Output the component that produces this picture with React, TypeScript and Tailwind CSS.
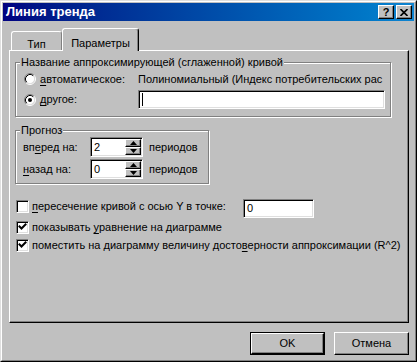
import React from 'react'

const font = { fontFamily: '"Liberation Sans", Arial, sans-serif' }

function Radio({ checked }: { checked?: boolean }) {
  return (
    <svg width="12" height="12" viewBox="0 0 12 12" className="shrink-0">
      <circle cx="6" cy="6" r="4.5" fill="#fff" />
      <path d="M2.11 9.89 A5.5 5.5 0 0 1 9.89 2.11" fill="none" stroke="#808080" strokeWidth="1" />
      <path d="M9.89 2.11 A5.5 5.5 0 0 1 2.11 9.89" fill="none" stroke="#fff" strokeWidth="1" />
      <path d="M2.82 9.18 A4.5 4.5 0 0 1 9.18 2.82" fill="none" stroke="#000" strokeWidth="1" />
      <path d="M9.18 2.82 A4.5 4.5 0 0 1 2.82 9.18" fill="none" stroke="#dfdfdf" strokeWidth="1" />
      {checked && <circle cx="6" cy="6" r="2" fill="#000" />}
    </svg>
  )
}

function Checkbox({ checked }: { checked?: boolean }) {
  return (
    <div className="w-[13px] h-[13px] shrink-0 bg-white border border-t-[#808080] border-l-[#808080] border-r-white border-b-white shadow-[inset_1px_1px_#000,inset_-1px_-1px_#dfdfdf]">
      {checked && (
        <svg width="11" height="11" viewBox="0 0 11 11">
          <path d="M2.5 4.5 L4.5 6.5 L8.5 2.5" fill="none" stroke="#000" strokeWidth="2" strokeLinecap="square" />
        </svg>
      )}
    </div>
  )
}

function Spin({ value }: { value: string }) {
  return (
    <div className="w-[53px] h-[20px] flex bg-white border border-t-[#808080] border-l-[#808080] border-r-white border-b-white shadow-[inset_1px_1px_#000,inset_-1px_-1px_#dfdfdf] p-[1px]">
      <div className="flex-1 pl-[2px] leading-[16px]">{value}</div>
      <div className="w-[16px] flex flex-col">
        {[0, 1].map((i) => (
          <div
            key={i}
            className="flex-1 flex items-center justify-center bg-[#c0c0c0] border border-t-white border-l-white border-r-black border-b-black shadow-[inset_-1px_-1px_#808080]"
          >
            <svg width="7" height="4" viewBox="0 0 7 4">
              <path d={i === 0 ? 'M3.5 0 L7 4 L0 4 Z' : 'M0 0 L7 0 L3.5 4 Z'} fill="#000" />
            </svg>
          </div>
        ))}
      </div>
    </div>
  )
}

function Group({ label, className, children }: { label: string; className: string; children: React.ReactNode }) {
  return (
    <div className={`relative border border-[#808080] shadow-[inset_1px_1px_#fff,1px_1px_#fff] ${className}`}>
      <span className="absolute -top-[8px] left-[4px] px-[1px] bg-[#c0c0c0] leading-[14px]">{label}</span>
      {children}
    </div>
  )
}

function U({ children }: { children: React.ReactNode }) {
  return <span className="underline underline-offset-2">{children}</span>
}

export default function App() {
  return (
    <div style={font} className="w-[417px] h-[362px] bg-[#c0c0c0] text-[11px] text-black border border-t-[#dfdfdf] border-l-[#dfdfdf] border-r-black border-b-black">
      <div className="h-full flex flex-col border border-t-white border-l-white border-r-[#808080] border-b-[#808080] p-[1px]">
        {/* Title bar */}
        <div className="h-[18px] flex items-center justify-between pl-[3px] pr-[2px] bg-gradient-to-r from-[#000080] to-[#1084d0]">
          <span className="text-white font-bold text-[13px]">Линия тренда</span>
          <div className="flex gap-[2px]">
            <div className="w-[16px] h-[14px] flex items-center justify-center bg-[#c0c0c0] border border-t-white border-l-white border-r-black border-b-black shadow-[inset_-1px_-1px_#808080] font-bold text-[11px] leading-none">
              ?
            </div>
            <div className="w-[16px] h-[14px] flex items-center justify-center bg-[#c0c0c0] border border-t-white border-l-white border-r-black border-b-black shadow-[inset_-1px_-1px_#808080]">
              <svg width="8" height="7" viewBox="0 0 8 7">
                <path d="M0.5 0 L7.5 7 M7.5 0 L0.5 7" stroke="#000" strokeWidth="1.6" />
              </svg>
            </div>
          </div>
        </div>

        {/* Body */}
        <div className="pl-[6px] pt-[7px]">
          {/* Tabs */}
          <div className="flex items-end h-[22px] pl-[2px]">
            <div className="w-[51px] h-[19px] flex justify-center pt-[4px] border-t border-l border-t-white border-l-white border-r border-r-[#808080] rounded-t-[3px]">
              Тип
            </div>
            <div className="relative z-10 w-[77px] h-[23px] -mb-[1px] flex justify-center pt-[6px] bg-[#c0c0c0] border-t border-l border-t-white border-l-white border-r border-r-black shadow-[inset_-1px_0_#808080] rounded-t-[3px]">
              Параметры
            </div>
          </div>

          {/* Panel */}
          <div className="w-[400px] h-[273px] border border-t-white border-l-white border-r-black border-b-black shadow-[inset_-1px_-1px_#808080] pl-[5px] pt-[11px]">
            <Group label="Название аппроксимирующей (сглаженной) кривой" className="w-[376px] h-[55px] pl-[8px] pt-[9px]">
              <div className="flex items-center h-[14px]">
                <Radio />
                <span className="ml-[4px] w-[98px]">
                  <U>а</U>втоматическое:
                </span>
                <span>Полиномиальный (Индекс потребительских рас</span>
              </div>
              <div className="flex items-center h-[19px] mt-[4px]">
                <Radio checked />
                <span className="ml-[4px] w-[98px]">
                  <U>д</U>ругое:
                </span>
                <div className="w-[247px] h-[19px] bg-white border border-t-[#808080] border-l-[#808080] border-r-white border-b-white shadow-[inset_1px_1px_#000,inset_-1px_-1px_#dfdfdf] pl-[3px] pt-[2px]">
                  <div className="w-[1px] h-[13px] bg-black" />
                </div>
              </div>
            </Group>

            <Group label="Прогноз" className="w-[194px] h-[54px] mt-[13px] pl-[7px] pt-[6px]">
              <div className="flex items-center">
                <span className="w-[67px]">
                  вп<U>е</U>ред на:
                </span>
                <Spin value="2" />
                <span className="ml-[6px]">периодов</span>
              </div>
              <div className="flex items-center mt-[2px]">
                <span className="w-[67px]">
                  <U>н</U>азад на:
                </span>
                <Spin value="0" />
                <span className="ml-[6px]">периодов</span>
              </div>
            </Group>

            <div className="pl-[1px] mt-[15px]">
              <div className="flex items-start h-[19px]">
                <div className="mt-[1px]">
                  <Checkbox />
                </div>
                <span className="ml-[3px] w-[211px] leading-[14px]">
                  <U>п</U>ересечение кривой с осью Y в точке:
                </span>
                <div className="w-[71px] h-[19px] bg-white border border-t-[#808080] border-l-[#808080] border-r-white border-b-white shadow-[inset_1px_1px_#000,inset_-1px_-1px_#dfdfdf] pl-[3px] leading-[16px]">
                  0
                </div>
              </div>
              <div className="flex items-center mt-[3px] h-[13px]">
                <Checkbox checked />
                <span className="ml-[3px]">
                  показывать <U>у</U>равнение на диаграмме
                </span>
              </div>
              <div className="flex items-center mt-[5px] h-[13px]">
                <Checkbox checked />
                <span className="ml-[3px]">
                  поместить на диаграмму величину досто<U>в</U>ерности аппроксимации (R^2)
                </span>
              </div>
            </div>
          </div>

          {/* Buttons */}
          <div className="w-[400px] flex justify-end gap-[9px] mt-[9px]">
            <div className="w-[75px] h-[23px] border border-black">
              <div className="h-full flex items-center justify-center border border-t-white border-l-white border-r-black border-b-black shadow-[inset_-1px_-1px_#808080]">
                OK
              </div>
            </div>
            <div className="w-[75px] h-[23px] flex items-center justify-center border border-t-white border-l-white border-r-black border-b-black shadow-[inset_-1px_-1px_#808080]">
              Отмена
            </div>
          </div>
        </div>
      </div>
    </div>
  )
}
